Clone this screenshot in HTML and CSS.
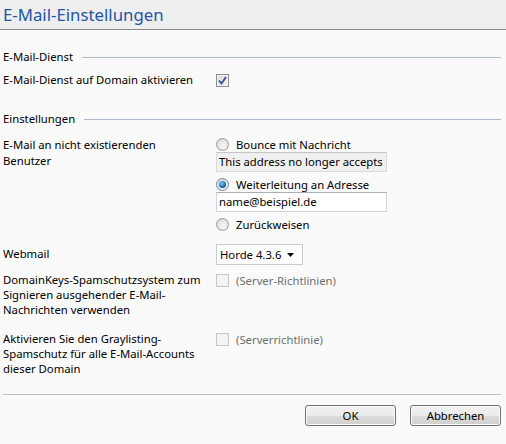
FILE: index.html
```html
<!DOCTYPE html>
<html lang="de">
<head>
<meta charset="utf-8">
<title>E-Mail-Einstellungen</title>
<link rel="stylesheet" href="styles.css">
</head>
<body>
<div class="header"><h1 class="title">E-Mail-Einstellungen</h1></div>
<div class="content">
  <div class="section s1"><span class="section-label">E-Mail-Dienst</span><span class="section-line"></span></div>
  <div class="row r-enable">
    <div class="label">E-Mail-Dienst auf Domain aktivieren</div>
    <div class="field"><span class="cb checked"><svg viewBox="0 0 9 9" width="9" height="9"><path d="M1 4.5 L3.5 7.5 L8 1" fill="none" stroke="#3b4f96" stroke-width="1.8"/></svg></span></div>
  </div>
  <div class="section s2"><span class="section-label">Einstellungen</span><span class="section-line"></span></div>
  <div class="row r-user">
    <div class="label narrow">E-Mail an nicht existierenden Benutzer</div>
    <div class="field options">
      <div class="radio-row"><span class="radio"></span><span>Bounce mit Nachricht</span></div>
      <div class="textbox disabled">This address no longer accepts mail.</div>
      <div class="radio-row gap"><span class="radio on"><span class="dot"></span></span><span>Weiterleitung an Adresse</span></div>
      <div class="textbox">name@beispiel.de</div>
      <div class="radio-row gap"><span class="radio"></span><span>Zurückweisen</span></div>
    </div>
  </div>
  <div class="row r-webmail">
    <div class="label">Webmail</div>
    <div class="field"><div class="select"><span>Horde 4.3.6</span><svg viewBox="0 0 7 4" width="7" height="4"><path d="M0 0 H7 L3.5 4 Z" fill="#000"/></svg></div></div>
  </div>
  <div class="row r-dk">
    <div class="label ml">DomainKeys-Spamschutzsystem zum Signieren ausgehender E-Mail-Nachrichten verwenden</div>
    <div class="field inline"><span class="cb off"></span><span class="muted">(Server-Richtlinien)</span></div>
  </div>
  <div class="row r-grey">
    <div class="label ml">Aktivieren Sie den Graylisting-Spamschutz für alle E-Mail-Accounts dieser Domain</div>
    <div class="field inline"><span class="cb off"></span><span class="muted">(Serverrichtlinie)</span></div>
  </div>
  <div class="footer-line"></div>
  <div class="buttons">
    <button class="btn">OK</button>
    <button class="btn">Abbrechen</button>
  </div>
</div>
</body>
</html>
```
FILE: styles.css
```css
html, body {
  margin: 0;
  padding: 0;
  background: #fafafa;
}
body {
  font-family: "Noto Sans", "Open Sans", sans-serif;
  font-size: 11.3px;
  line-height: 16px;
  color: #000;
  width: 506px;
  height: 444px;
  overflow: hidden;
}
.header {
  height: 29px;
  background: #eeeeee;
  border-bottom: 1px solid #8a8a8a;
  padding-left: 3px;
  display: flex;
  align-items: center;
}
.title {
  margin: 0;
  font-weight: normal;
  font-size: 16.8px;
  line-height: 22px;
  color: #2456a6;
}
.content {
  padding: 0 5px 0 3px;
}
.section {
  display: flex;
  align-items: center;
  gap: 9px;
  height: 16px;
}
.s1 { margin-top: 19px; }
.s2 { margin-top: 23px; }
.section-line {
  flex: 1;
  height: 1px;
  background: #aebbcc;
}
.row {
  display: grid;
  grid-template-columns: 213px 1fr;
}
.r-enable { margin-top: 7px; }
.r-user { margin-top: 10px; }
.r-webmail { margin-top: 12px; }
.r-dk { margin-top: 7px; }
.r-grey { margin-top: 14px; }
.label.narrow { padding-right: 50px; }
.label.ml { line-height: 15px; padding-right: 8px; }
.r-webmail .label { padding-top: 2px; }
.field { display: flex; align-items: flex-start; }
.field.inline { gap: 7px; align-items: center; height: 15px; margin-top: 1px; }
.r-enable .field { align-items: center; height: 16px; }
.cb {
  width: 13px;
  height: 13px;
  box-sizing: border-box;
  border: 1px solid #8f8f8f;
  display: flex;
  align-items: center;
  justify-content: center;
}
.cb.checked {
  background: linear-gradient(135deg, #dcdcdc, #f2f2f2);
  box-shadow: inset 0 0 0 1px #f4f4f4;
}
.cb.off {
  border-color: #c6c6c6;
  background: #f4f4f4;
}
.muted { color: #6f6f6f; }
.options {
  flex-direction: column;
  width: 171px;
}
.radio-row {
  display: flex;
  align-items: center;
  gap: 7px;
  height: 15px;
  line-height: 15px;
  white-space: nowrap;
}
.radio-row.gap { margin-top: 5px; }
.radio {
  width: 13px;
  height: 13px;
  box-sizing: border-box;
  border-radius: 50%;
  border: 1px solid #9a9a9a;
  background: radial-gradient(circle at 60% 65%, #f8f8f8, #d2d2d2);
  display: flex;
  align-items: center;
  justify-content: center;
}
.radio.on { border-color: #6d86a8; }
.dot {
  width: 7px;
  height: 7px;
  border-radius: 50%;
  background: radial-gradient(circle at 40% 35%, #6fd2f6, #0f5a8c 70%);
}
.textbox {
  width: 171px;
  height: 20px;
  box-sizing: border-box;
  border: 1px solid #d0d5dc;
  border-top-color: #a9adb4;
  background: #fff;
  padding: 0 2px;
  line-height: 18px;
  white-space: nowrap;
  overflow: hidden;
}
.textbox.disabled {
  background: #f0f0f0;
  border-color: #dadada;
  border-top-color: #c4c4c4;
}
.select {
  width: 87px;
  height: 21px;
  box-sizing: border-box;
  border: 1px solid #c6cbd3;
  background: #fff;
  display: flex;
  align-items: center;
  justify-content: space-between;
  padding: 0 8px 0 3px;
}
.footer-line {
  margin-top: 18px;
  height: 1px;
  background: #b7bfc8;
}
.buttons {
  display: flex;
  justify-content: flex-end;
  gap: 14px;
  margin-top: 10px;
}
.btn {
  width: 91px;
  height: 21px;
  box-sizing: border-box;
  border: 1px solid #707070;
  border-radius: 3px;
  background: linear-gradient(#f2f2f2 0%, #ebebeb 50%, #dddddd 51%, #cfcfcf 100%);
  box-shadow: inset 0 0 0 1px #fbfbfb;
  font-family: inherit;
  font-size: 11.3px;
  color: #000;
  padding: 0;
}
```
